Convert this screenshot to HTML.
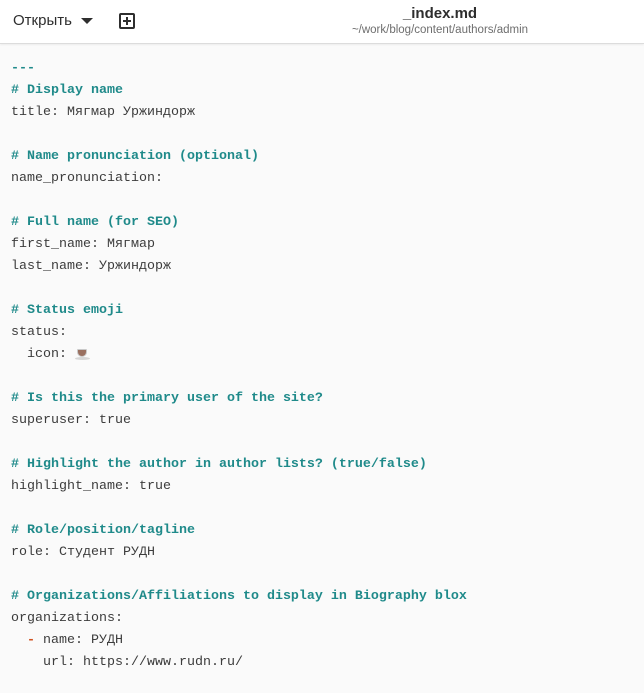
<!DOCTYPE html>
<html><head><meta charset="utf-8"><style>
html,body{margin:0;padding:0;width:644px;height:693px;overflow:hidden;background:#fafafa;}
.hdr{position:absolute;left:0;top:0;width:644px;height:43px;background:#fff;border-bottom:1px solid #dcdcdc;box-shadow:0 1px 2px rgba(0,0,0,.06);font-family:"Liberation Sans",sans-serif;}
.open{position:absolute;left:13px;top:12px;font-size:15px;color:#2e2e2e;}
.tri{position:absolute;left:81px;top:18px;width:0;height:0;border-left:6px solid transparent;border-right:6px solid transparent;border-top:6px solid #2e2e2e;}
.plus{position:absolute;left:119px;top:13px;width:12px;height:12px;border:2px solid #2e2e2e;border-radius:2px;}
.plus:before{content:"";position:absolute;left:5px;top:2px;width:2px;height:8px;background:#2e2e2e;}
.plus:after{content:"";position:absolute;left:2px;top:5px;width:8px;height:2px;background:#2e2e2e;}
.title{position:absolute;left:0;width:880px;top:5px;text-align:center;font-size:15px;font-weight:bold;color:#2e2e2e;}
.path{position:absolute;left:0;width:880px;top:24px;text-align:center;font-size:11.5px;color:#6e6e6e;}
pre{position:absolute;left:11px;top:58px;margin:0;font-family:"Liberation Mono","DejaVu Sans Mono",monospace;font-size:13.33px;line-height:22px;color:#3c3c3c;}
.c{color:#1f8a8a;font-weight:bold;}
.o{color:#d0501e;font-weight:bold;}
.cup{display:inline-block;position:relative;width:16px;height:14px;vertical-align:-3px;}
.cup i{position:absolute;left:2px;top:3px;width:10px;height:8px;background:#9a7060;border-radius:1px 1px 5px 5px;border:1px solid #c9c9c9;box-sizing:border-box;}
.cup b{position:absolute;left:0;top:11px;width:15px;height:3px;background:#d6d6d6;border-radius:50%;}
</style></head><body>
<div class="hdr">
<div class="open">Открыть</div><div class="tri"></div>
<div class="plus"></div>
<div class="title">_index.md</div>
<div class="path">~/work/blog/content/authors/admin</div>
</div>
<pre><span class="c">---</span>
<span class="c"># Display name</span>
title: Мягмар Уржиндорж

<span class="c"># Name pronunciation (optional)</span>
name_pronunciation:

<span class="c"># Full name (for SEO)</span>
first_name: Мягмар
last_name: Уржиндорж

<span class="c"># Status emoji</span>
status:
  icon: <span class="cup"><i></i><b></b></span>

<span class="c"># Is this the primary user of the site?</span>
superuser: true

<span class="c"># Highlight the author in author lists? (true/false)</span>
highlight_name: true

<span class="c"># Role/position/tagline</span>
role: Студент РУДН

<span class="c"># Organizations/Affiliations to display in Biography blox</span>
organizations:
  <span class="o">-</span> name: РУДН
    url: https://www.rudn.ru/
</pre>
</body></html>
